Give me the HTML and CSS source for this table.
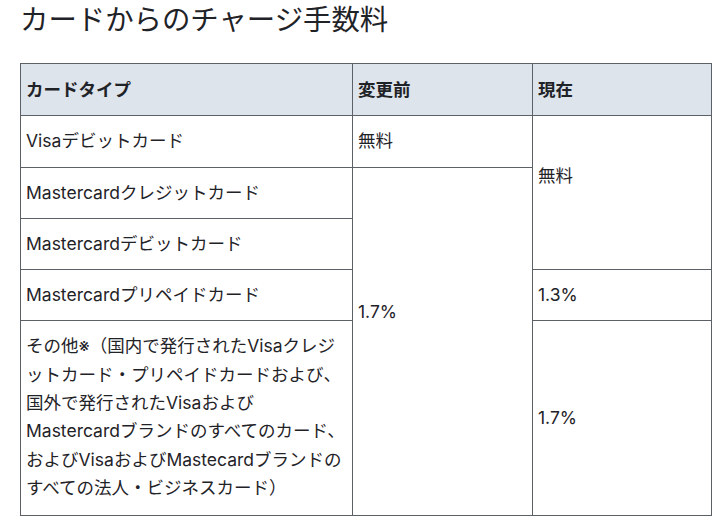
FILE: index.html
```html
<!DOCTYPE html>
<html lang="ja">
<head>
<meta charset="utf-8">
<title>カードからのチャージ手数料</title>
<link rel="stylesheet" href="styles.css">
</head>
<body>
<main class="page">
  <h2 class="title">カードからのチャージ手数料</h2>
  <table class="fees">
    <colgroup>
      <col class="c1"><col class="c2"><col class="c3">
    </colgroup>
    <thead>
      <tr><th>カードタイプ</th><th>変更前</th><th>現在</th></tr>
    </thead>
    <tbody>
      <tr>
        <td>Visaデビットカード</td>
        <td>無料</td>
        <td rowspan="3" class="span-free">無料</td>
      </tr>
      <tr>
        <td>Mastercardクレジットカード</td>
        <td rowspan="4" class="span-rate">1.7%</td>
      </tr>
      <tr>
        <td>Mastercardデビットカード</td>
      </tr>
      <tr>
        <td>Mastercardプリペイドカード</td>
        <td>1.3%</td>
      </tr>
      <tr>
        <td class="long">その他※（国内で発行されたVisaクレジットカード・プリペイドカードおよび、国外で発行されたVisaおよびMastercardブランドのすべてのカード、およびVisaおよびMastecardブランドのすべての法人・ビジネスカード）</td>
        <td>1.7%</td>
      </tr>
    </tbody>
  </table>
</main>
</body>
</html>
```
FILE: styles.css
```css
html, body {
  margin: 0;
  padding: 0;
  background: #ffffff;
}

.page {
  padding: 0 20px;
  font-family: Inter, "Noto Sans CJK JP", sans-serif;
  color: #1f2328;
}

.title {
  margin: 0;
  padding-top: 2px;
  font-size: 28.4px;
  font-weight: 400;
  line-height: 36px;
  height: 61px;
}

.fees {
  width: 691px;
  border-collapse: collapse;
  table-layout: fixed;
  font-size: 17.5px;
  line-height: 28.3px;
  text-spacing-trim: space-all;
  line-break: normal;
}

.c1 { width: 332px; }
.c2 { width: 180px; }
.c3 { width: 179px; }

.fees th,
.fees td {
  border: 1px solid #5b6167;
  padding: 11px 5px 11px 5px;
  text-align: left;
  vertical-align: middle;
}

.fees th {
  background: #dde4eb;
  font-weight: 700;
  padding-top: 12px;
  padding-bottom: 11px;
}

.fees td.span-free {
  vertical-align: top;
  padding-top: 46px;
}

.fees td.span-rate {
  vertical-align: top;
  padding-top: 130px;
}

.fees td.long {
  padding-top: 11px;
  padding-bottom: 13px;
}
```
